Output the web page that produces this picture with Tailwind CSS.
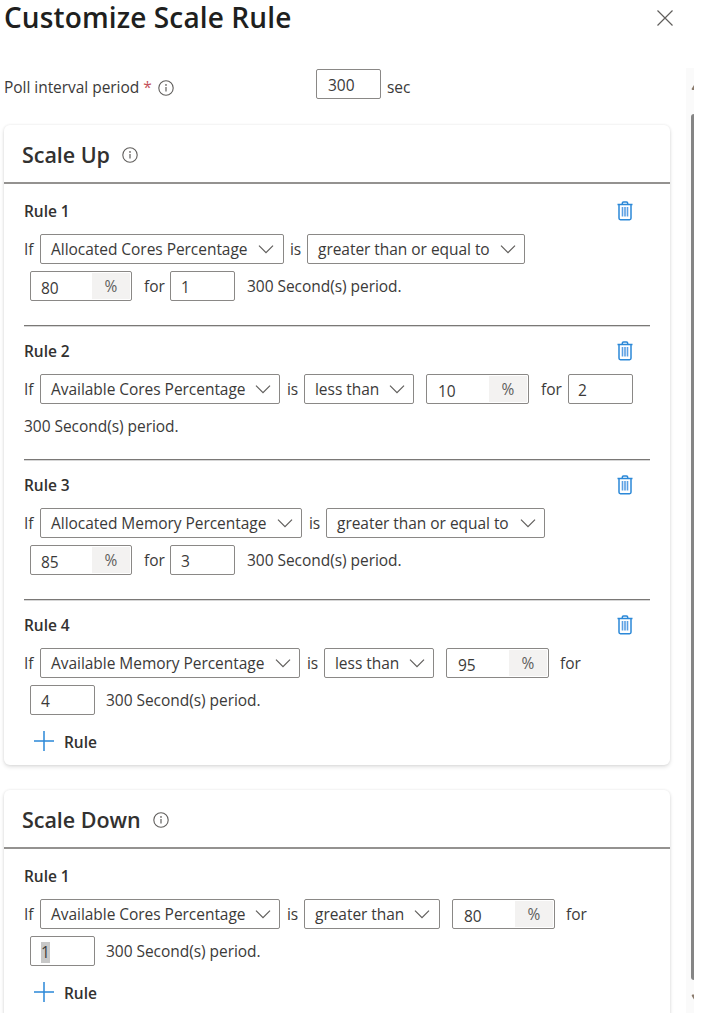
<!DOCTYPE html>
<html lang="en">
<head>
<meta charset="utf-8">
<title>Customize Scale Rule</title>
<script src="https://cdn.jsdelivr.net/npm/@tailwindcss/browser@4"></script>
</head>
<body class="h-[1013px] w-[712px] overflow-hidden bg-white font-['Open_Sans','Noto_Sans',sans-serif] text-[15.5px] tracking-[-0.04px] text-[#3b3a39]">
<svg class="hidden">
  <symbol id="info" viewBox="0 0 16 16"><circle cx="8" cy="8" r="7.2" fill="none" stroke="currentColor" stroke-width="1.1"/><path d="M8 7v4.6" stroke="currentColor" stroke-width="1.2"/><circle cx="8" cy="4.9" r=".85" fill="currentColor"/></symbol>
  <symbol id="chev" viewBox="0 0 16 10"><path d="M1 1.7l7 7 7-7" fill="none" stroke="#605e5c" stroke-width="1.2"/></symbol>
  <symbol id="trash" viewBox="0 0 16 20"><path d="M.5 3.5h15M5.3 3.3V2.2q0-1.2 1.2-1.2h3q1.2 0 1.2 1.2v1.1M2 3.7v13.6q0 1.4 1.4 1.4h9.2q1.4 0 1.4-1.4V3.7" fill="none" stroke="#2b88d8" stroke-width="1.5"/><path d="M5.5 6v9.5M8 6v9.5M10.5 6v9.5" stroke="#5b9fe3" stroke-width="1.6"/></symbol>
  <symbol id="plus" viewBox="0 0 20 20"><path d="M10 0v20M0 10h20" stroke="#2b88d8" stroke-width="1.5"/></symbol>
</svg>
<div class="flex">
<main class="w-[686px] shrink-0 pl-1">
  <header class="flex h-[68px] items-start justify-between pr-[13px]">
    <h1 class="text-[28px] leading-[34px] font-semibold tracking-[0.12px] text-[#201f1e]">Customize Scale Rule</h1>
    <svg class="mt-[10px] h-4 w-4 text-[#605e5c]" viewBox="0 0 16 16"><path d="M.5.5l15 15M15.5.5l-15 15" stroke="currentColor" stroke-width="1.2"/></svg>
  </header>
  <div class="flex h-[57px] items-start">
    <div class="flex h-[38px] w-[312px] items-center pt-px"><span>Poll interval period</span><span class="ml-1 text-[#c4545c]">*</span><svg class="ml-[6px] h-4 w-4 text-[#605e5c]"><use href="#info"/></svg></div>
    <div class="mt-px flex h-[30px] w-[65px] items-center rounded-[2px] border border-[#8a8886] pt-[4px] pl-[11px]">300</div>
    <div class="flex h-[38px] items-center pt-px pl-[6px]">sec</div>
  </div>

  <section class="h-[640px] w-[666px] rounded-[6px] shadow-[0_2px_4px_rgba(0,0,0,0.12),0_0_3px_rgba(0,0,0,0.08)]">
    <div class="flex h-[59px] items-center border-b-2 border-[#949290] pl-[18px]"><h2 class="pt-[3px] text-[21.5px] font-semibold text-[#323130]">Scale Up</h2><svg class="mt-[3px] ml-3 h-4 w-4 text-[#605e5c]"><use href="#info"/></svg></div>
    <div class="pr-5 pl-5">
      <div class="mb-px h-[142px] border-b border-[#7a7876] pt-4 shadow-[0_1px_0_#d6d6d6]">
        <div class="flex h-[22px] items-center justify-between pr-[17px]"><h3 class="pt-[2px] font-semibold text-[#323130]">Rule 1</h3><svg class="h-5 w-4"><use href="#trash"/></svg></div>
        <div class="mt-3 flex h-[30px] items-center">
          <span class="w-4 pt-[2px]">If</span>
          <div class="flex h-[30px] w-[244px] items-center justify-between rounded-[2px] border border-[#8a8886] pr-[9px] pl-[10px]"><span class="pt-[2px]">Allocated Cores Percentage</span><svg class="h-[10px] w-4"><use href="#chev"/></svg></div>
          <span class="w-[23px] pt-[2px] pl-[6px]">is</span>
          <div class="flex h-[30px] w-[218px] items-center justify-between rounded-[2px] border border-[#8a8886] pr-[8px] pl-[10px]"><span class="pt-[2px]">greater than or equal to</span><svg class="h-[10px] w-4"><use href="#chev"/></svg></div>
        </div>
        <div class="mt-[7px] flex h-[30px] items-center pl-[6px]">
          <div class="flex h-[30px] w-[102px] items-stretch rounded-[2px] border border-[#8a8886] p-px"><span class="flex-1 pt-[4px] pl-[9px]">80</span><span class="flex w-[38px] items-center justify-center bg-[#f3f2f1] pt-[2px] text-[#605e5c]">%</span></div>
          <span class="w-[38px] pt-[2px] pl-3">for</span>
          <div class="flex h-[30px] w-[65px] items-center rounded-[2px] border border-[#8a8886] pt-[4px] pl-[10px]">1</div>
          <span class="pt-[2px] pl-3">300 Second(s) period.</span>
        </div>
      </div>
      <div class="mb-px h-[133px] border-b border-[#7a7876] pt-[13px] shadow-[0_1px_0_#d6d6d6]">
        <div class="flex h-[22px] items-center justify-between pr-[17px]"><h3 class="pt-[2px] font-semibold text-[#323130]">Rule 2</h3><svg class="h-5 w-4"><use href="#trash"/></svg></div>
        <div class="mt-3 flex h-[30px] items-center">
          <span class="w-4 pt-[2px]">If</span>
          <div class="flex h-[30px] w-[240px] items-center justify-between rounded-[2px] border border-[#8a8886] pr-[8px] pl-[10px]"><span class="pt-[2px]">Available Cores Percentage</span><svg class="h-[10px] w-4"><use href="#chev"/></svg></div>
          <span class="w-[24px] pt-[2px] pl-[7px]">is</span>
          <div class="flex h-[30px] w-[110px] items-center justify-between rounded-[2px] border border-[#8a8886] pr-[8px] pl-[10px]"><span class="pt-[2px]">less than</span><svg class="h-[10px] w-4"><use href="#chev"/></svg></div>
          <div class="ml-3 flex h-[30px] w-[103px] items-stretch rounded-[2px] border border-[#8a8886] p-px"><span class="flex-1 pt-[4px] pl-[10px]">10</span><span class="flex w-[38px] items-center justify-center bg-[#f3f2f1] pt-[2px] text-[#605e5c]">%</span></div>
          <span class="w-[39px] pt-[2px] pl-3">for</span>
          <div class="flex h-[30px] w-[65px] items-center rounded-[2px] border border-[#8a8886] pt-[4px] pl-[9px]">2</div>
        </div>
        <div class="mt-[7px] flex h-[30px] items-center pt-[2px]">300 Second(s) period.</div>
      </div>
      <div class="mb-px h-[139px] border-b border-[#7a7876] pt-[13px] shadow-[0_1px_0_#d6d6d6]">
        <div class="flex h-[22px] items-center justify-between pr-[17px]"><h3 class="pt-[2px] font-semibold text-[#323130]">Rule 3</h3><svg class="h-5 w-4"><use href="#trash"/></svg></div>
        <div class="mt-3 flex h-[30px] items-center">
          <span class="w-4 pt-[2px]">If</span>
          <div class="flex h-[30px] w-[262px] items-center justify-between rounded-[2px] border border-[#8a8886] pr-[8px] pl-[10px]"><span class="pt-[2px]">Allocated Memory Percentage</span><svg class="h-[10px] w-4"><use href="#chev"/></svg></div>
          <span class="w-[24px] pt-[2px] pl-[7px]">is</span>
          <div class="flex h-[30px] w-[219px] items-center justify-between rounded-[2px] border border-[#8a8886] pr-[8px] pl-[10px]"><span class="pt-[2px]">greater than or equal to</span><svg class="h-[10px] w-4"><use href="#chev"/></svg></div>
        </div>
        <div class="mt-[7px] flex h-[30px] items-center pl-[6px]">
          <div class="flex h-[30px] w-[102px] items-stretch rounded-[2px] border border-[#8a8886] p-px"><span class="flex-1 pt-[4px] pl-[9px]">85</span><span class="flex w-[38px] items-center justify-center bg-[#f3f2f1] pt-[2px] text-[#605e5c]">%</span></div>
          <span class="w-[38px] pt-[2px] pl-3">for</span>
          <div class="flex h-[30px] w-[65px] items-center rounded-[2px] border border-[#8a8886] pt-[4px] pl-[10px]">3</div>
          <span class="pt-[2px] pl-3">300 Second(s) period.</span>
        </div>
      </div>
      <div class="pt-[13px]">
        <div class="flex h-[22px] items-center justify-between pr-[17px]"><h3 class="pt-[2px] font-semibold text-[#323130]">Rule 4</h3><svg class="h-5 w-4"><use href="#trash"/></svg></div>
        <div class="mt-3 flex h-[30px] items-center">
          <span class="w-4 pt-[2px]">If</span>
          <div class="flex h-[30px] w-[260px] items-center justify-between rounded-[2px] border border-[#8a8886] pr-[8px] pl-[10px]"><span class="pt-[2px]">Available Memory Percentage</span><svg class="h-[10px] w-4"><use href="#chev"/></svg></div>
          <span class="w-[24px] pt-[2px] pl-[7px]">is</span>
          <div class="flex h-[30px] w-[110px] items-center justify-between rounded-[2px] border border-[#8a8886] pr-[8px] pl-[10px]"><span class="pt-[2px]">less than</span><svg class="h-[10px] w-4"><use href="#chev"/></svg></div>
          <div class="ml-3 flex h-[30px] w-[103px] items-stretch rounded-[2px] border border-[#8a8886] p-px"><span class="flex-1 pt-[4px] pl-[10px]">95</span><span class="flex w-[38px] items-center justify-center bg-[#f3f2f1] pt-[2px] text-[#605e5c]">%</span></div>
          <span class="w-[39px] pt-[2px] pl-[11px]">for</span>
        </div>
        <div class="mt-[7px] flex h-[30px] items-center pl-[6px]">
          <div class="flex h-[30px] w-[65px] items-center rounded-[2px] border border-[#8a8886] pt-[4px] pl-[10px]">4</div>
          <span class="pt-[2px] pl-[11px]">300 Second(s) period.</span>
        </div>
        <div class="mt-[15px] flex h-[22px] items-center pl-[10px]"><svg class="h-5 w-5"><use href="#plus"/></svg><span class="pt-[4px] pl-[10px] font-semibold text-[#323130]">Rule</span></div>
      </div>
    </div>
  </section>

  <section class="mt-[25px] h-[260px] w-[666px] rounded-[6px] shadow-[0_2px_4px_rgba(0,0,0,0.12),0_0_3px_rgba(0,0,0,0.08)]">
    <div class="flex h-[59px] items-center border-b-2 border-[#949290] pl-[18px]"><h2 class="pt-[3px] text-[21.5px] font-semibold text-[#323130]">Scale Down</h2><svg class="mt-[3px] ml-3 h-4 w-4 text-[#605e5c]"><use href="#info"/></svg></div>
    <div class="px-5 pt-4">
      <div class="flex h-[22px] items-center"><h3 class="pt-[2px] font-semibold text-[#323130]">Rule 1</h3></div>
      <div class="mt-3 flex h-[30px] items-center">
        <span class="w-4 pt-[2px]">If</span>
        <div class="flex h-[30px] w-[240px] items-center justify-between rounded-[2px] border border-[#8a8886] pr-[8px] pl-[10px]"><span class="pt-[2px]">Available Cores Percentage</span><svg class="h-[10px] w-4"><use href="#chev"/></svg></div>
        <span class="w-[24px] pt-[2px] pl-[7px]">is</span>
        <div class="flex h-[30px] w-[136px] items-center justify-between rounded-[2px] border border-[#8a8886] pr-[9px] pl-[10px]"><span class="pt-[2px]">greater than</span><svg class="h-[10px] w-4"><use href="#chev"/></svg></div>
        <div class="ml-3 flex h-[30px] w-[103px] items-stretch rounded-[2px] border border-[#8a8886] p-px"><span class="flex-1 pt-[4px] pl-[10px]">80</span><span class="flex w-[38px] items-center justify-center bg-[#f3f2f1] pt-[2px] text-[#605e5c]">%</span></div>
        <span class="w-[39px] pt-[2px] pl-[11px]">for</span>
      </div>
      <div class="mt-[7px] flex h-[30px] items-center pl-[6px]">
        <div class="flex h-[30px] w-[65px] items-center rounded-[2px] border border-[#8a8886] pt-[3px] pl-[10px]"><span class="bg-[#c8c8c8] leading-[21px]">1</span></div>
        <span class="pt-[2px] pl-[11px]">300 Second(s) period.</span>
      </div>
      <div class="mt-[15px] flex h-[22px] items-center pl-[10px]"><svg class="h-5 w-5"><use href="#plus"/></svg><span class="pt-[4px] pl-[10px] font-semibold text-[#323130]">Rule</span></div>
    </div>
  </section>
</main>
<div class="mt-[68px] flex h-[945px] w-2 flex-col items-end overflow-hidden bg-[#fafafa]">
  <svg class="mt-[17px] h-[6px] w-[3px]" viewBox="0 0 3 6"><path d="M3 0v5H1.5Q.3 5 .8 3.5z" fill="#8a7a6c"/></svg>
  <div class="mt-[23px] h-[866px] w-[3px] rounded-l-[3px] bg-[#858585]"></div>
  <svg class="mt-[14px] h-[6px] w-[3px]" viewBox="0 0 3 6"><path d="M3 5.5V.5H1.5Q.3.5.8 2z" fill="#8a7a6c"/></svg>
</div>
</div>
</body>
</html>
